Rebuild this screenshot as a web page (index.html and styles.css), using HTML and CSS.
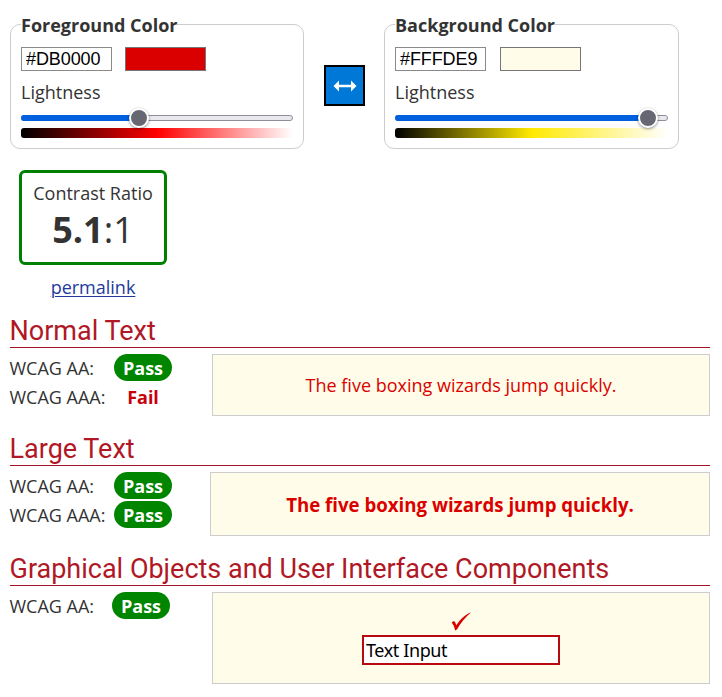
FILE: index.html
```html
<!DOCTYPE html>
<html lang="en">
<head>
<meta charset="utf-8">
<title>Contrast Checker</title>
<link rel="stylesheet" href="styles.css">
</head>
<body>
<main>
  <div class="colors">
    <section class="panel">
      <h3><span>Foreground Color</span></h3>
      <div class="fields"><div class="hex">#DB0000</div><div class="swatch red"></div></div>
      <div class="label">Lightness</div>
      <div class="slider"><div class="fill fill-fg"></div><div class="thumb"></div></div>
      <div class="gradient gradient-fg"></div>
    </section>
    <button class="swap" aria-label="Swap colors">
      <svg width="24" height="12" viewBox="0 0 24 12"><path d="M0.5 6 L6 0.5 V4.7 H18 V0.5 L23.5 6 L18 11.5 V7.3 H6 V11.5Z" fill="#fff"/></svg>
    </button>
    <section class="panel">
      <h3><span>Background Color</span></h3>
      <div class="fields"><div class="hex">#FFFDE9</div><div class="swatch cream"></div></div>
      <div class="label">Lightness</div>
      <div class="slider"><div class="fill fill-bg"></div><div class="thumb"></div></div>
      <div class="gradient gradient-bg"></div>
    </section>
  </div>

  <div class="result">
    <div class="ratio"><div class="caption">Contrast Ratio</div><div class="value"><b>5.1</b>:1</div></div>
    <a href="#">permalink</a>
  </div>

  <section class="test">
    <h2>Normal Text</h2>
    <div class="body">
      <div class="levels">
        <div class="level"><span class="name">WCAG AA:</span><b class="pass">Pass</b></div>
        <div class="level"><span class="name">WCAG AAA:</span><b class="fail">Fail</b></div>
      </div>
      <div class="sample normal">The five boxing wizards jump quickly.</div>
    </div>
  </section>
  <section class="test">
    <h2>Large Text</h2>
    <div class="body">
      <div class="levels narrow">
        <div class="level"><span class="name">WCAG AA:</span><b class="pass">Pass</b></div>
        <div class="level"><span class="name">WCAG AAA:</span><b class="pass">Pass</b></div>
      </div>
      <div class="sample large">The five boxing wizards jump quickly.</div>
    </div>
  </section>
  <section class="test">
    <h2>Graphical Objects and User Interface Components</h2>
    <div class="body">
      <div class="levels">
        <div class="level"><span class="name short">WCAG AA:</span><b class="pass">Pass</b></div>
      </div>
      <div class="sample graphic">
        <svg width="20" height="19" viewBox="0 0 20 19"><path d="M0.7 10.6 Q2.3 8.8 3.7 9.6 Q4.6 10.6 5.2 13.3 Q10.5 4.8 19.2 0.5 L19.4 1 Q11.5 7.6 6.2 17.2 L4.2 18.4 Q2.8 13 0.7 10.6Z" fill="#db0000"/></svg>
        <div class="input">Text Input</div>
      </div>
    </div>
  </section>
</main>
</body>
</html>
```
FILE: styles.css
```css
* { box-sizing: border-box; }
body { margin: 0; background: #fff; color: #333; font: 18px/27px "Open Sans", sans-serif; }
main { width: 700px; margin-left: 10px; padding-top: 24px; }
h2, h3 { margin: 0; }

.colors { display: flex; align-items: flex-start; }
.panel { width: 294px; height: 125px; padding: 0 10px; border: 1px solid #ccc; border-radius: 10px; }
.panel:last-child { width: 295px; }
.panel h3 { margin-top: -13px; height: 27px; font-size: 18px; line-height: 27px; }
.panel h3 span { background: #fff; }
.fields { display: flex; gap: 13px; margin-top: 8px; }
.hex { width: 91px; height: 24px; padding-left: 4px; border: 1px solid #8a8a8a; background: #fff; color: #000; font: 18px/22px "Liberation Sans", sans-serif; letter-spacing: -0.1px; }
.panel:last-child .fields { gap: 14px; }
.swatch { width: 81px; height: 24px; border: 1px solid #767676; }
.red { background: #db0000; }
.cream { background: #fffde9; }
.label { margin-top: 8px; height: 27px; }
.slider { display: flex; align-items: center; height: 6px; margin-top: 9px; border: 1px solid #8f8f9d; border-radius: 3px; background: #e9e9ed; }
.fill { flex: none; height: 6px; margin-left: -1px; border-radius: 3px 0 0 3px; background: #0060df; }
.fill-fg { width: 109px; }
.fill-bg { width: 244px; }
.thumb { flex: none; width: 20px; height: 20px; margin-left: -1px; border: 2px solid #fff; border-radius: 50%; background: #676774; box-shadow: 0 1px 3px rgba(0,0,0,.45); }
.gradient { height: 10px; margin-top: 7px; border-radius: 3px; }
.gradient-fg { background: linear-gradient(to right, #000, #f00 50%, #fff); }
.gradient-bg { background: linear-gradient(to right, #000, #ffe900 50%, #fff); }
.swap { display: flex; align-items: center; justify-content: center; width: 41px; height: 41px; margin: 41px 19px 0 20px; padding: 0; border: 2px solid #000; background: #0078d7; }

.result { display: flex; flex-direction: column; align-items: center; width: 148px; margin: 21px 0 0 9px; }
.ratio { width: 148px; height: 95px; padding-top: 7px; border: 3px solid #008000; border-radius: 6px; text-align: center; }
.caption { height: 27px; }
.value { font-size: 36px; line-height: 46px; }
.result a { margin-top: 9px; color: #233a9c; text-decoration-thickness: 1px; text-underline-offset: 2px; }

.result + .test { margin-top: 9px; }
.test { margin-bottom: 12px; }
.test h2 { height: 38px; border-bottom: 1px solid #a31628; color: #b01825; font: 400 27px/43px Roboto, sans-serif; text-indent: -0.5px; }
.body { display: flex; align-items: flex-start; padding-top: 6px; }
.levels { flex: none; display: grid; gap: 2px; width: 202px; }
.levels.narrow { width: 200px; }
.level { display: flex; height: 27px; line-height: 28px; }
.name { width: 104px; text-indent: -0.5px; }
.name.short { width: 102px; }
.pass { width: 58px; border-radius: 14px; background: #008500; color: #fff; text-align: center; }
.fail { width: 58px; color: #c8000a; text-align: center; }
.sample { flex: 1; display: flex; align-items: center; justify-content: center; border: 1px solid #ccc; background: #fffde9; color: #db0000; }
.normal { height: 62px; }
.large { height: 64px; font-size: 18.67px; font-weight: 700; }
.graphic { flex-direction: column; justify-content: flex-start; height: 92px; padding-top: 19px; }
.graphic svg { margin-right: 1px; }
.input { width: 198px; height: 30px; margin-top: 4px; padding-left: 2px; border: 2px solid #b90910; background: #fff; color: #000; font: 18px/26px "Noto Sans", sans-serif; letter-spacing: -0.4px; }
```
